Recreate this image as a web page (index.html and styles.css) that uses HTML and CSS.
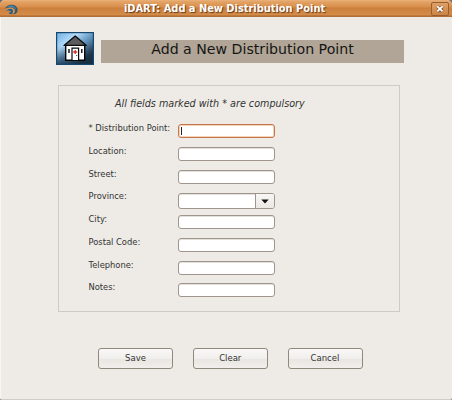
FILE: index.html
```html
<!DOCTYPE html>
<html lang="en">
<head>
<meta charset="utf-8">
<title>iDART: Add a New Distribution Point</title>
<link rel="stylesheet" href="styles.css">
</head>
<body>
<div class="window">
  <header class="titlebar">
    <svg class="app-icon" width="13" height="11" viewBox="0 0 13 11">
      <path d="M0 4.5Q2 .8 6.5 .8Q12 1 12.6 5.5Q12.5 10 8 10.6Q11 7.5 9.5 5Q6 2.5 0 4.5Z" fill="#355668"/>
      <path d="M1 3.5Q4 1 7.5 1.6Q11 3 11 6Q9.5 3.2 6 3Q3 2.8 1 3.5Z" fill="#4b84a6"/>
      <path d="M1 6.8Q4 4 6.8 5Q9.3 7 6.8 10.2Q3.8 10.4 3.5 8.5Q6 8.8 5.8 7.2Q4 6 1 6.8Z" fill="#315e80"/>
      <path d="M1 5.7Q6 2.8 8.4 5.2Q9.5 7 8.3 9" fill="none" stroke="#b9a58b" stroke-width=".7"/>
    </svg>
    <h1 class="window-title">iDART: Add a New Distribution Point</h1>
    <button class="close" aria-label="Close">
      <svg width="8" height="8" viewBox="0 0 8 8"><path d="M1.5 1.7l5 4.8M6.5 1.7l-5 4.8" stroke="#754622" stroke-width="3.2"/><path d="M1.3 1.4l5.2 5M6.5 1.4l-5.2 5" stroke="#fff" stroke-width="2"/></svg>
    </button>
  </header>
  <main class="content">
    <div class="heading">
      <svg class="house" width="38" height="33" viewBox="0 0 38 33">
        <defs>
          <linearGradient id="sky" x1="0" y1="0" x2="1" y2="1"><stop offset="0" stop-color="#6fafe4"/><stop offset=".3" stop-color="#b4dcfa"/><stop offset=".55" stop-color="#5d8fb8"/><stop offset=".8" stop-color="#24384a"/><stop offset="1" stop-color="#1d2d3b"/></linearGradient>
          <linearGradient id="shade" x1="0" y1="0" x2="0" y2="1"><stop offset=".4" stop-color="#153650" stop-opacity="0"/><stop offset="1" stop-color="#102a40" stop-opacity=".7"/></linearGradient>
        </defs>
        <rect x=".6" y=".6" width="36.8" height="31.8" fill="url(#sky)"/>
        <rect x=".6" y=".6" width="36.8" height="31.8" fill="url(#shade)" stroke="#17466e" stroke-width="1.2"/>
        <path d="M9.7 13h19v15.2h-19z" fill="#fff" stroke="#080808" stroke-width="1.4"/>
        <path d="M19.2 4L30.3 13.4H8Z" fill="#5b5b5b" stroke="#0b0b0b" stroke-width="1.3" stroke-linejoin="round"/>
        <path d="M16 28V16.2h6.6V28" fill="#fff" stroke="#080808" stroke-width="1.2"/>
        <path d="M13 17v4M25.8 17v4" stroke="#080808" stroke-width="1.4"/>
        <path d="M19.2 18v4M17.2 20h4" stroke="#d52e2e" stroke-width="1.3"/>
        <path d="M20.7 23v1" stroke="#222" stroke-width=".9"/>
      </svg>
      <div class="banner"><h2 class="banner-text">Add a New Distribution Point</h2></div>
    </div>
    <form class="panel">
      <p class="note"><span>All fields marked with * are compulsory</span></p>
      <div class="row"><label>* Distribution Point:</label><div class="field focused"><i class="caret"></i></div></div>
      <div class="row"><label>Location:</label><div class="field"></div></div>
      <div class="row"><label>Street:</label><div class="field"></div></div>
      <div class="row"><label>Province:</label><div class="field combo"><span class="drop"><svg width="8" height="5" viewBox="0 0 8 5"><path d="M.3.5h7.4L4 4.5Z" fill="#111"/></svg></span></div></div>
      <div class="row"><label>City:</label><div class="field"></div></div>
      <div class="row"><label>Postal Code:</label><div class="field"></div></div>
      <div class="row"><label>Telephone:</label><div class="field"></div></div>
      <div class="row"><label>Notes:</label><div class="field"></div></div>
    </form>
    <div class="actions">
      <button>Save</button><button>Clear</button><button>Cancel</button>
    </div>
  </main>
</div>
</body>
</html>
```
FILE: styles.css
```css
* { box-sizing: border-box; }
body { margin: 0; background: #6f6a66; font-family: "DejaVu Sans", sans-serif; color: #333; }
.window { width: 452px; height: 400px; overflow: hidden; background: #eeebe6; border-radius: 5px 5px 2px 2px; border-bottom: 1px solid #cfcbc6; display: flex; flex-direction: column; }
.titlebar { height: 17px; flex: none; display: flex; align-items: center; justify-content: space-between; padding: 0 3px 0 5px; background: linear-gradient(#e9b27b 0, #e2a163 2px, #d98f4b 7px, #cb803c 8px, #d58c49 15px, #a8662e 16px, #b6783f 17px); }
.app-icon { margin-top: 1px; }
.window-title { margin: 0; font-size: 9.85px; line-height: 17px; font-weight: bold; color: #fff; text-shadow: 1px 1px 1px #643a19; white-space: nowrap; }
.close { width: 18px; height: 14px; padding: 0; border: 1px solid #99602f; border-radius: 2px; background: linear-gradient(#dea069, #cb8546); display: flex; align-items: center; justify-content: center; }
.content { flex: 1; display: flex; flex-direction: column; border-left: 1px solid #f8f6f3; }
.heading { display: flex; padding: 15px 0 0 55px; height: 68px; }
.banner { width: 303px; height: 23px; margin: 8px 0 0 7px; background: #b0a596; text-align: center; }
.banner-text { margin: 0; font-size: 14.15px; line-height: 18px; font-weight: normal; color: #151515; white-space: nowrap; }
.panel { width: 342px; height: 227px; margin-left: 57px; border: 1px solid #cecbc7; padding-left: 29.5px; }
.note { margin: 0 0 6px 26.5px; padding-top: 10px; height: 32px; font-size: 9.62px; line-height: 15px; font-style: italic; white-space: nowrap; }
.row { display: grid; grid-template-columns: 89.5px 97px; height: 22.75px; align-items: start; }
.row label { margin-top: -1px; font-size: 8.35px; line-height: 10px; white-space: nowrap; }
.field { height: 14px; border: 1px solid #9f958c; border-radius: 3px; background: #fff; box-shadow: inset 0 1px #e4e0dc; }
.focused { border-color: #c3774b; box-shadow: inset 0 0 0 1px #f6d3b8; padding: 2px; }
.caret { display: block; width: 1px; height: 8px; background: #222; }
.combo { height: 16px; margin-top: .75px; display: flex; justify-content: flex-end; }
.drop { width: 19px; height: 100%; border-left: 1px solid #9f958c; border-radius: 0 2px 2px 0; background: linear-gradient(#f8f7f5, #ebe7e3); display: flex; align-items: center; justify-content: center; }
.actions { display: flex; gap: 19.75px; padding: 36px 0 0 97px; }
.actions button { width: 75px; height: 21px; padding: 0 0 1px; border: 1px solid #8f887d; border-radius: 3px; background: linear-gradient(#f9f8f7 0, #f1efed 50%, #e9e5e1 51%, #f1eeeb 100%); font: 8.5px/18px "DejaVu Sans", sans-serif; color: #333; }
```
